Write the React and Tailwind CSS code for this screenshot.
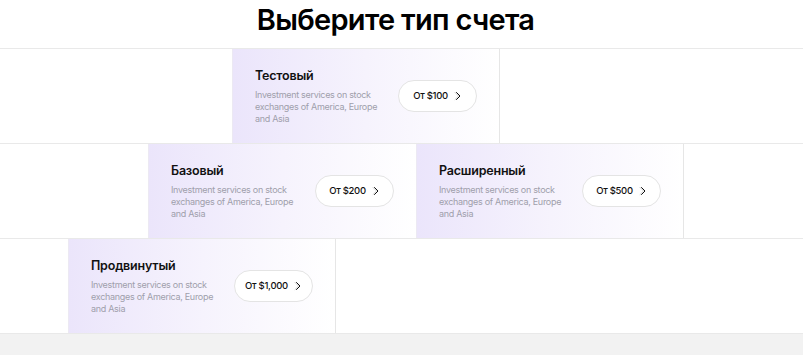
import React from "react";

const ChevronIcon = () => (
  <svg width="8" height="10" viewBox="0 0 8 10" fill="none" className="ml-[6px]">
    <path d="M2.5 1.5 L6 5 L2.5 8.5" stroke="#111" strokeWidth="1" strokeLinecap="round" strokeLinejoin="round" />
    <path d="M1 1.5 L4.5 5 L1 8.5" stroke="#c4c4c4" strokeWidth="0.8" strokeLinecap="round" strokeLinejoin="round" />
  </svg>
);

const PlanCard = ({ title, price, last }) => (
  <div
    className={`w-[268px] shrink-0 h-full flex items-center justify-between pl-[22px] pr-[22px] bg-gradient-to-r from-[#ebe5fb] via-[#f6f3fd] to-white border-l border-[#ece9f3] ${
      last ? "border-r border-r-[#e6e6e6]" : ""
    }`}
  >
    <div className="flex flex-col">
      <h3 className="text-[12.5px] leading-[16px] font-semibold tracking-[-0.2px] text-[#111] mb-[5px]">{title}</h3>
      <p className="text-[9px] leading-[12px] tracking-[-0.3px] text-[#9f9fab] w-[125px]">
        Investment services on stock exchanges of America, Europe and Asia
      </p>
    </div>
    <button className="h-[32px] w-[79px] rounded-full border border-[#e4e4e4] bg-white flex items-center justify-center text-[9.5px] font-medium tracking-[-0.3px] text-[#111]">
      {price}
      <ChevronIcon />
    </button>
  </div>
);

const rows = [
  { offset: "w-[232px]", cards: [{ title: "Тестовый", price: "От $100" }] },
  {
    offset: "w-[148px]",
    cards: [
      { title: "Базовый", price: "От $200" },
      { title: "Расширенный", price: "От $500" },
    ],
  },
  { offset: "w-[68px]", cards: [{ title: "Продвинутый", price: "От $1,000" }] },
];

const App = () => {
  return (
    <div className="w-[803px] h-[355px] bg-[#f2f2f2] overflow-hidden" style={{ fontFamily: "Inter, 'Noto Sans', sans-serif" }}>
      <div className="bg-white">
        <div className="h-[49px] flex items-start justify-center pr-[12px] border-b border-[#e9e9e9]">
          <h2 className="text-[29px] leading-[40px] font-semibold tracking-[-0.7px] text-black">Выберите тип счета</h2>
        </div>

        {rows.map((row, i) => (
          <div key={i} className="h-[95px] flex border-b border-[#e9e9e9]">
            <div className={`${row.offset} shrink-0`} />
            {row.cards.map((card, j) => (
              <PlanCard key={card.title} title={card.title} price={card.price} last={j === row.cards.length - 1} />
            ))}
            <div className="flex-1" />
          </div>
        ))}
      </div>
    </div>
  );
};

export default App;
